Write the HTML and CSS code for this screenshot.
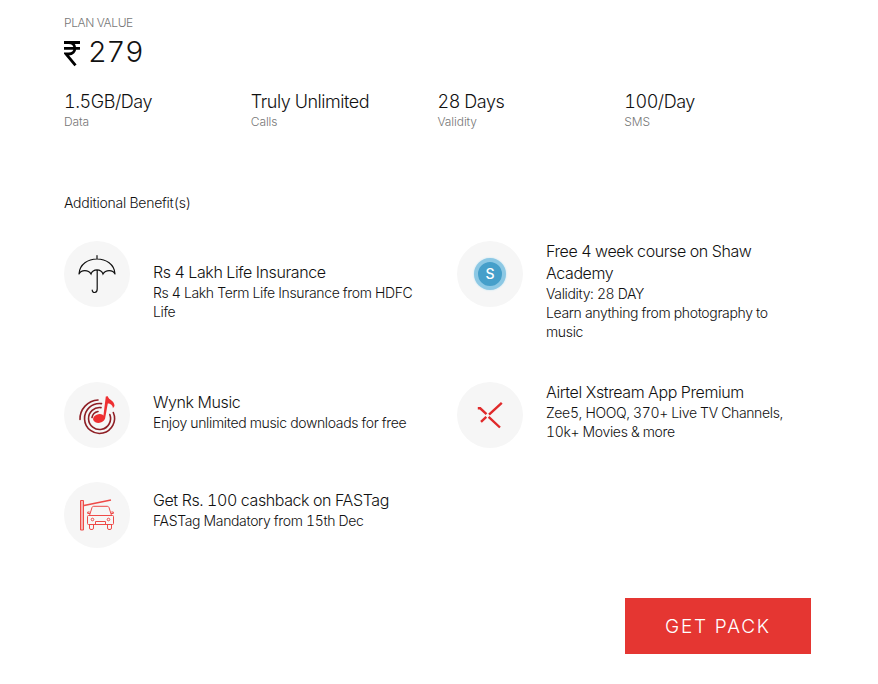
FILE: index.html
```html
<!DOCTYPE html>
<html lang="en">
<head>
  <meta charset="utf-8">
  <meta name="viewport" content="width=device-width, initial-scale=1">
  <title>Plan details</title>
  <link rel="stylesheet" href="styles.css">
</head>
<body>

  <div class="plan">
    <div class="plan-label">PLAN VALUE</div>
    <div class="plan-price">
      <svg class="rupee" width="16" height="26" viewBox="0 0 16 26" fill="none" stroke="#000" stroke-width="2.8">
        <path d="M0 1.500h16M0 7.300h16M0 1.500h4.500c8.500 0 8.500 11.500 0 11.500H2L11.500 24.300"/>
      </svg>
      <span class="amount">279</span>
    </div>

    <div class="stats">
      <div class="stat">
        <div class="stat-value">1.5GB/Day</div>
        <div class="stat-name">Data</div>
      </div>
      <div class="stat">
        <div class="stat-value">Truly Unlimited</div>
        <div class="stat-name">Calls</div>
      </div>
      <div class="stat">
        <div class="stat-value">28 Days</div>
        <div class="stat-name">Validity</div>
      </div>
      <div class="stat">
        <div class="stat-value">100/Day</div>
        <div class="stat-name">SMS</div>
      </div>
    </div>

    <div class="benefits-heading">Additional Benefit(s)</div>

    <div class="benefits">
      <div class="benefit insurance">
        <div class="benefit-icon">
          <svg width="66" height="66" viewBox="0 0 66 66" fill="none" stroke="#111" stroke-width="1.200" stroke-linecap="round">
            <path d="M33 14.500v3.500M15 33c1-20 35-20 36 0M15 33c2-4.500 9.500-4.500 12 0c2-5.500 10-5.500 12 0c2.500-4.500 10-4.500 12 0M33.200 29v19c0 4.500-5 4.500-5 1"/>
          </svg>
        </div>
        <div class="benefit-text">
          <div class="benefit-title">Rs 4 Lakh Life Insurance</div>
          <div class="benefit-desc">Rs 4 Lakh Term Life Insurance from HDFC Life</div>
        </div>
      </div>

      <div class="benefit">
        <div class="benefit-icon">
          <div class="shaw">S</div>
        </div>
        <div class="benefit-text">
          <div class="benefit-title">Free 4 week course on Shaw Academy</div>
          <div class="benefit-desc">Validity: 28 DAY</div>
          <div class="benefit-desc">Learn anything from photography to music</div>
        </div>
      </div>

      <div class="benefit wynk">
        <div class="benefit-icon">
          <svg width="66" height="66" viewBox="0 0 66 66" fill="none" stroke="#8f1f25" stroke-width="1.600" stroke-linecap="round">
            <path d="M16 37.500A19 19 0 0 1 34 18"/>
            <path d="M49.300 30.500A15 15 0 1 1 37.500 21.600"/>
            <path d="M45.800 32.500A11 11 0 1 1 37 25.600"/>
            <path d="M28 35.500A7.500 7.500 0 0 1 34 29.500"/>
            <ellipse cx="35" cy="36.500" rx="6" ry="4.400" transform="rotate(-10 35 36.500)" fill="#ee2f31" stroke="none"/>
            <path d="M39 37L41.800 14.500l2-.3c.7 4 7 4 6.700 9.800l-1.600 2.300c.2-3.300-3.200-5-5.100-4.800L41 37z" fill="#ee2f31" stroke="none"/>
          </svg>
        </div>
        <div class="benefit-text">
          <div class="benefit-title">Wynk Music</div>
          <div class="benefit-desc">Enjoy unlimited music downloads for free</div>
        </div>
      </div>

      <div class="benefit">
        <div class="benefit-icon">
          <svg width="66" height="66" viewBox="0 0 66 66" fill="none" stroke="#e02a2b" stroke-width="2.400">
            <path d="M20.800 26.300h2.400l6.300 5.900M32 32.600L44.800 20.900M31.600 34.800L43 45.500M29.300 34.800L24 39.900"/>
          </svg>
        </div>
        <div class="benefit-text">
          <div class="benefit-title">Airtel Xstream App Premium</div>
          <div class="benefit-desc">Zee5, HOOQ, 370+ Live TV Channels, 10k+ Movies &amp; more</div>
        </div>
      </div>

      <div class="benefit fastag">
        <div class="benefit-icon">
          <svg width="66" height="66" viewBox="0 0 66 66" fill="none" stroke="#ee4a48" stroke-width="1">
            <path d="M16.500 18.500h3v29.500h-3z" fill="#f6b5b4"/>
            <path d="M20 23.500L47 18" stroke-width="1.600"/>
            <path d="M25.500 33.500l2.500-8q.4-1.200 1.700-1.200h13.600q1.200 0 1.700 1.200l2.500 8M24.500 33.500h24q1 0 1 1v7q0 1-1 1h-24q-1 0-1-1v-7q0-1 1-1zM31.500 42.500v-3h10v3M25.500 42.500v3.500q0 1.500 1.500 1.500h1q1.500 0 1.500-1.500v-3.500M43.500 42.500v3.500q0 1.500 1.500 1.500h1q1.500 0 1.500-1.500v-3.500M26 31.500h-2.300v-1.500h2M47 31.500h2.300v-1.500h-2"/>
            <circle cx="28.500" cy="37.500" r="1.300"/>
            <circle cx="44.500" cy="37.500" r="1.300"/>
          </svg>
        </div>
        <div class="benefit-text">
          <div class="benefit-title">Get Rs. 100 cashback on FASTag</div>
          <div class="benefit-desc">FASTag Mandatory from 15th Dec</div>
        </div>
      </div>
    </div>

    <button class="get-pack" type="button">GET PACK</button>
  </div>

</body>
</html>
```
FILE: styles.css
```css
* {
  box-sizing: border-box;
}
body {
  margin: 0;
  background: #fff;
  color: #111;
  font-family: Inter, "Liberation Sans", sans-serif;
  font-weight: 300;
  font-variant-numeric: tabular-nums;
}
.plan {
  display: flex;
  flex-direction: column;
  width: 811px;
  padding: 15px 0 0 64px;
}
.plan-label {
  font-size: 12px;
  line-height: 16px;
  letter-spacing: -0.4px;
  color: #777;
}
/* Price with the rupee sign */
.plan-price {
  display: flex;
  align-items: center;
  gap: 8px;
  height: 42px;
}
.rupee {
  margin-top: 3px;
}
.amount {
  font-size: 29px;
  line-height: 42px;
  letter-spacing: -0.2px;
}
.stats {
  display: grid;
  grid-template-columns: repeat(4, 1fr);
  margin-top: 18px;
}
.stat-value {
  font-size: 18px;
  line-height: 22px;
  letter-spacing: -0.45px;
}
.stat-name {
  font-size: 12px;
  line-height: 17px;
  letter-spacing: -0.1px;
  color: #777;
}
.benefits-heading {
  margin-top: 64px;
  font-size: 14px;
  line-height: 18px;
  letter-spacing: -0.25px;
}
/* Benefits, two per row */
.benefits {
  display: grid;
  grid-template-columns: 393px 354px;
  grid-template-rows: 141px 100px 66px;
  margin-top: 29px;
}
.benefit {
  display: flex;
  align-items: flex-start;
  gap: 23px;
}
.benefit-icon {
  display: flex;
  flex: none;
  align-items: center;
  justify-content: center;
  width: 66px;
  height: 66px;
  border-radius: 50%;
  background: #f6f6f6;
}
.benefit-text {
  width: 260px;
  margin-top: -1px;
}
.insurance .benefit-text {
  padding-top: 21px;
}
.wynk .benefit-text {
  padding-top: 10px;
}
.fastag .benefit-text {
  padding-top: 8px;
}
.benefit-title {
  font-size: 16px;
  line-height: 22px;
  letter-spacing: -0.4px;
}
.benefit-desc {
  font-size: 14px;
  line-height: 19px;
  letter-spacing: -0.35px;
}
/* Shaw Academy badge */
.shaw {
  width: 32px;
  height: 32px;
  border: 4px solid #8cc8e4;
  border-radius: 50%;
  background: #459fca;
  color: #fff;
  font-size: 14px;
  font-weight: 500;
  line-height: 24px;
  text-align: center;
  box-shadow: 0 0 2px #b5dff0;
}
.get-pack {
  align-self: flex-end;
  width: 186px;
  height: 56px;
  margin-top: 50px;
  padding: 0;
  border: 0;
  background: #e53632;
  color: #fff;
  font: inherit;
  font-size: 19px;
  letter-spacing: 1.8px;
  cursor: pointer;
}
```
